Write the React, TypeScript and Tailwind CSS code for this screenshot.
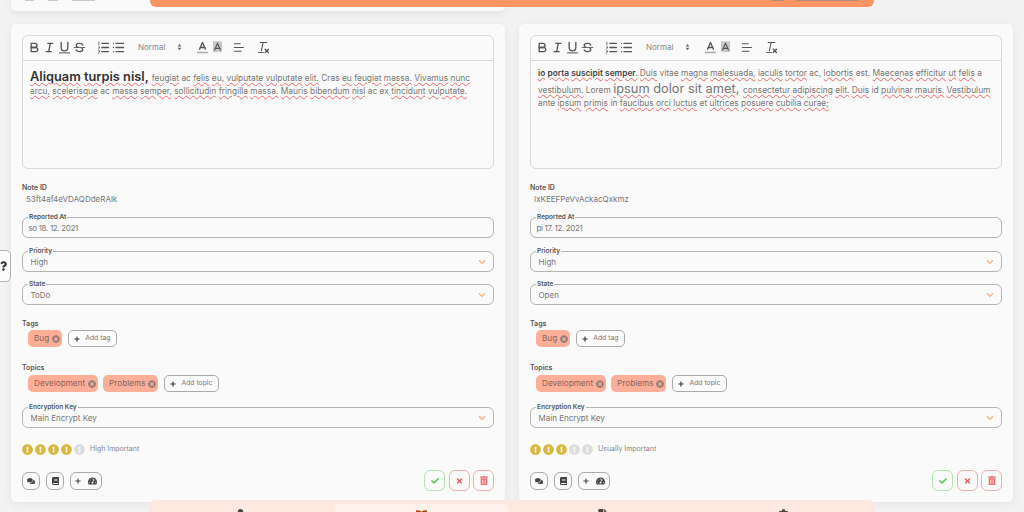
import React from "react";
import { FaBook, FaCheck, FaComments, FaExclamationCircle, FaPlus, FaTachometerAlt, FaTimes, FaTimesCircle, FaTrashAlt, FaChevronDown, FaQuestion, FaBookOpen, FaUser, FaFile, FaCog } from "react-icons/fa";

const FONT = "font-['Inter','Lato',sans-serif]";

function Rich({ t }: { t: string }) {
  return (
    <>
      {t.split(" ").map((w, i) => (
        <React.Fragment key={i}>
          {w.startsWith("~") ? (
            <span className="underline decoration-wavy decoration-[#ee6666] decoration-1 underline-offset-1">{w.slice(1)}</span>
          ) : (
            w
          )}{" "}
        </React.Fragment>
      ))}
    </>
  );
}

const Ico = ({ children }: { children: React.ReactNode }) => (
  <svg viewBox="0 0 18 18" className="w-[15px] h-[15px] shrink-0 fill-none stroke-[#555] stroke-[1.600] [stroke-linecap:round] [stroke-linejoin:round]">
    {children}
  </svg>
);

function Toolbar() {
  return (
    <div className="h-[25px] border-b border-[#d9d9d9] flex items-center pl-[4px] pb-[2px] shrink-0">
      <div className="flex">
        <Ico>
          <path d="M5,4H9.500A2.500,2.500,0,0,1,12,6.500v0A2.500,2.500,0,0,1,9.500,9H5V4Z" />
          <path d="M5,9h5.500A2.500,2.500,0,0,1,13,11.500v0A2.500,2.500,0,0,1,10.500,14H5V9Z" />
        </Ico>
        <Ico>
          <line x1="7" x2="13" y1="4" y2="4" />
          <line x1="5" x2="11" y1="14" y2="14" />
          <line x1="8" x2="10" y1="14" y2="4" />
        </Ico>
        <Ico>
          <path d="M5,3V9a4,4,0,0,0,4,4h0a4,4,0,0,0,4-4V3" />
          <line x1="3" x2="15" y1="15.500" y2="15.500" className="stroke-[#777]" />
        </Ico>
        <Ico>
          <line x1="2.500" x2="15.500" y1="9" y2="9" className="stroke-1" />
          <path d="M12.900,6C12.500,4.800,11,4,9,4 6.700,4,5,5.100,5,6.500 5,7.400 5.600,8.300 7,8.700" />
          <path d="M5.100,12C5.500,13.200,7,14,9,14c2.300,0,4-1.100,4-2.500 0-.9-.6-1.500-1.500-1.900" />
        </Ico>
      </div>
      <div className="flex ml-[9px]">
        <Ico>
          <line x1="7" x2="15" y1="4" y2="4" />
          <line x1="7" x2="15" y1="9" y2="9" />
          <line x1="7" x2="15" y1="14" y2="14" />
          <path d="M3.500 2.500V6M3 8.500h1.500L3 11M3 13h1.500L3 16" className="stroke-1" />
        </Ico>
        <Ico>
          <line x1="6" x2="15" y1="4" y2="4" />
          <line x1="6" x2="15" y1="9" y2="9" />
          <line x1="6" x2="15" y1="14" y2="14" />
          <line x1="3" x2="3" y1="4" y2="4" />
          <line x1="3" x2="3" y1="9" y2="9" />
          <line x1="3" x2="3" y1="14" y2="14" />
        </Ico>
      </div>
      <span className="ml-[12px] text-[8px] text-[#888] w-[39px]">Normal</span>
      <svg viewBox="0 0 8 12" className="w-[5px] h-[8px] fill-[#666] shrink-0">
        <path d="M4 1 7 5H1ZM4 11 1 7H7Z" />
      </svg>
      <div className="flex ml-[13px]">
        <Ico>
          <polyline points="5.500 11 9 3 12.500 11" />
          <line x1="11.630" x2="6.380" y1="9" y2="9" />
          <line x1="3" x2="15" y1="15" y2="15" className="stroke-[#aaa]" />
        </Ico>
        <Ico>
          <rect x="3.500" y="1.500" width="11" height="13" className="fill-[#c8c8c8] stroke-none" />
          <polyline points="5.500 12 9 4 12.500 12" className="stroke-[1.300]" />
          <line x1="11.630" x2="6.380" y1="10" y2="10" className="stroke-[1.300]" />
        </Ico>
      </div>
      <div className="ml-[6px]">
        <Ico>
          <line x1="4" x2="11" y1="4.500" y2="4.500" className="stroke-[1.300]" />
          <line x1="4" x2="15" y1="9" y2="9" className="stroke-[1.300]" />
          <line x1="4" x2="12" y1="13.500" y2="13.500" className="stroke-[1.300]" />
        </Ico>
      </div>
      <div className="ml-[10px]">
        <Ico>
          <line x1="5" x2="13" y1="3" y2="3" className="stroke-[1.300]" />
          <line x1="8.500" x2="6.500" y1="3" y2="13" className="stroke-[1.300]" />
          <line x1="3" x2="9" y1="15" y2="15" className="stroke-[1.100]" />
          <line x1="11" x2="15" y1="11" y2="15" />
          <line x1="15" x2="11" y1="11" y2="15" />
        </Ico>
      </div>
    </div>
  );
}

function Field({ label, value, select, cls = "" }: { label: string; value: string; select?: boolean; cls?: string }) {
  return (
    <div className={`relative h-[21px] rounded-[6px] border border-[#b4b4b4] flex items-center justify-between ${select ? "pl-[7.500px]" : "pl-[5.500px] tracking-[-0.35px]"} pr-[7px] ${cls}`}>
      <span className="absolute left-[5px] top-[-6px] bg-[#fafafa] px-px text-[6.500px] leading-[10px] font-semibold tracking-normal text-[#555]">{label}</span>
      <span className="text-[8px] text-[#777]">{value}</span>
      {select && <FaChevronDown className="w-[8px] h-[8px] text-[#ffb27f]" />}
    </div>
  );
}

function Chip({ children }: { children: string }) {
  return (
    <span className="h-[17px] rounded-[5px] bg-[#ffae98] pl-[6px] pr-[2px] flex items-center gap-[3px] text-[8.200px] text-[#85655b]">
      {children}
      <FaTimesCircle className="w-[8px] h-[8px] text-[#8f7d77]" />
    </span>
  );
}

function AddBtn({ children }: { children: string }) {
  return (
    <span className="h-[17px] rounded-[5px] border border-[#aaa] bg-[#fcfcfc] pl-[5px] pr-[6px] flex items-center gap-[5px] text-[6.800px] text-[#777]">
      <FaPlus className="w-[6px] h-[6px] text-[#333]" />
      {children}
    </span>
  );
}

function Foot({ children, cls = "" }: { children: React.ReactNode; cls?: string }) {
  return <span className={`h-[18px] rounded-[6px] border border-[#aaa] flex items-center justify-center text-[#444] ${cls}`}>{children}</span>;
}

function Act({ color, border, children }: { color: string; border: string; children: React.ReactNode }) {
  return <span className={`w-[21px] h-[21px] rounded-[6px] border flex items-center justify-center ${color} ${border}`}>{children}</span>;
}

function Card(p: {
  body: React.ReactNode;
  id: string;
  date: string;
  state: string;
  level: number;
  levelText: string;
}) {
  return (
    <div className="h-[478px] rounded-[5px] bg-[#fafafa] shadow-[0_2px_8px_rgba(0,0,0,0.06)] p-[11px] flex flex-col">
      <div className="h-[134px] shrink-0 rounded-[6px] border border-[#d9d9d9] flex flex-col">
        <Toolbar />
        {p.body}
      </div>
      <div className="mt-[13.500px] text-[7px] leading-[10px] font-semibold text-[#555]">Note ID</div>
      <div className="mt-[1px] pl-[4px] text-[8px] leading-[10px] text-[#777]">{p.id}</div>
      <Field cls="mt-[13.500px]" label="Reported At" value={p.date} />
      <Field cls="mt-[13px]" label="Priority" value="High" select />
      <Field cls="mt-[12px]" label="State" value={p.state} select />
      <div className="mt-[13.500px] text-[7px] leading-[10px] font-semibold text-[#555]">Tags</div>
      <div className="mt-[1.500px] pl-[6px] flex gap-[6px]">
        <Chip>Bug</Chip>
        <AddBtn>Add tag</AddBtn>
      </div>
      <div className="mt-[16px] text-[7px] leading-[10px] font-semibold text-[#555]">Topics</div>
      <div className="mt-[2px] pl-[6px] flex gap-[5px]">
        <Chip>Development</Chip>
        <Chip>Problems</Chip>
        <span className="ml-px flex">
          <AddBtn>Add topic</AddBtn>
        </span>
      </div>
      <Field cls="mt-[15px]" label="Encryption Key" value="Main Encrypt Key" select />
      <div className="mt-[16px] flex items-center h-[11px]">
        <div className="flex gap-[2px]">
          {[0, 1, 2, 3, 4].map((i) => (
            <FaExclamationCircle key={i} className={`w-[11px] h-[11px] ${i < p.level ? "text-[#d9b73c]" : "text-[#dcdcdc]"}`} />
          ))}
        </div>
        <span className="ml-[5px] text-[7px] text-[#888]">{p.levelText}</span>
      </div>
      <div className="mt-[15px] flex items-center justify-between">
        <div className="flex gap-[6px] items-center">
          <Foot cls="w-[18px]">
            <FaComments className="w-[8px] h-[8px]" />
          </Foot>
          <Foot cls="w-[18px]">
            <FaBook className="w-[7px] h-[8px]" />
          </Foot>
          <Foot cls="w-[32px] gap-[7px]">
            <FaPlus className="w-[6px] h-[6px]" />
            <FaTachometerAlt className="w-[9px] h-[8px]" />
          </Foot>
        </div>
        <div className="flex gap-[3.500px]">
          <Act color="text-[#4fcb4f]" border="border-[#b0e6ad]">
            <FaCheck className="w-[8px] h-[8px]" />
          </Act>
          <Act color="text-[#e25c5c]" border="border-[#efb0b0]">
            <FaTimes className="w-[7px] h-[8px]" />
          </Act>
          <Act color="text-[#e87070]" border="border-[#efb0b0]">
            <FaTrashAlt className="w-[8px] h-[9px]" />
          </Act>
        </div>
      </div>
    </div>
  );
}

export default function App() {
  return (
    <div className={`relative w-[1024px] h-[512px] overflow-hidden bg-[#f2f2f2] ${FONT}`}>
      <div className="px-[11px] grid grid-cols-2 gap-x-[14px] gap-y-[13px]">
        <div className="h-[11px] rounded-b-[5px] bg-[#fafafa] shadow-[0_2px_8px_rgba(0,0,0,0.08)] flex gap-[14px] pl-[14px] items-start">
          <span className="w-[9px] h-px bg-[#c9c9c9]" />
          <span className="w-[10px] h-px bg-[#c9c9c9]" />
          <span className="w-[23px] h-px bg-[#c9c9c9]" />
        </div>
        <div className="h-[11px]" />
        <Card
          id="53ft4af4eVDAQDdeRAlk"
          date="so 18. 12. 2021"
          state="ToDo"
          level={4}
          levelText="High Important"
          body={
            <div className="pt-[8.500px] pl-[7px] pr-[6px] text-[8.400px] leading-[13.500px] text-[#777]">
              <span className="text-[12.800px] font-semibold text-[#333]">
                <Rich t="~Aliquam ~turpis ~nisl," />
              </span>
              <Rich t="~feugiat ac ~felis ~eu, ~vulputate ~vulputate ~elit. Cras ~eu ~feugiat ~massa. ~Vivamus ~nunc ~arcu, ~scelerisque ac ~massa ~semper, ~sollicitudin ~fringilla ~massa. ~Mauris ~bibendum ~nisl ac ex ~tincidunt ~vulputate." />
            </div>
          }
        />
        <Card
          id="IxKEEFPeVvAckacQxkmz"
          date="pi 17. 12. 2021"
          state="Open"
          level={3}
          levelText="Usually Important"
          body={
            <div className="pt-[6px] pl-[7px] pr-[6px] text-[8.400px] leading-[13px] text-[#777]">
              <span className="font-semibold text-[#444]">
                <Rich t="~io ~porta ~suscipit ~semper." />
              </span>
              <Rich t="~Duis vitae ~magna ~malesuada, ~iaculis ~tortor ac, ~lobortis est. ~Maecenas ~efficitur ~ut ~felis a ~vestibulum. Lorem" />
              <span className="text-[12.800px] leading-[17px]">
                <Rich t="~ipsum dolor sit ~amet," />
              </span>
              <Rich t="~consectetur ~adipiscing ~elit. ~Duis id ~pulvinar ~mauris. ~Vestibulum ante ~ipsum ~primis in ~faucibus ~orci ~luctus et ~ultrices ~posuere ~cubilia ~curae;" />
            </div>
          }
        />
      </div>

      <div className="absolute left-[150px] top-0 w-[724px] h-[7px] rounded-b-[6px] bg-[#ff9562] flex items-start justify-end pr-[16px] gap-[12px]">
        <span className="w-[12px] h-px bg-[#b08a78]" />
        <span className="w-[62px] h-px bg-[#b08a78]" />
      </div>

      <div className="absolute left-[150px] top-[500px] w-[724px] h-[12px] rounded-t-[5px] bg-[#ffe8e0] grid grid-cols-4 pt-[4px]">
        {[FaUser, FaBookOpen, FaFile, FaCog].map((I, i) => (
          <div key={i} className={`h-[8px] mx-[4px] flex justify-center rounded-t-[5px] ${i === 1 ? "bg-[#fff2ed]" : ""}`}>
            <I className={`w-[11px] h-[11px] mt-[5px] ${i === 1 ? "text-[#b8410e]" : "text-[#444]"}`} />
          </div>
        ))}
      </div>

      <div className="absolute left-[-6px] top-[250px] w-[17px] h-[32px] rounded-[5px] border border-[#b4b4b4] bg-[#fcfcfc] flex items-center justify-end pr-[3px]">
        <FaQuestion className="w-[7px] h-[12px] text-[#333]" />
      </div>
    </div>
  );
}
